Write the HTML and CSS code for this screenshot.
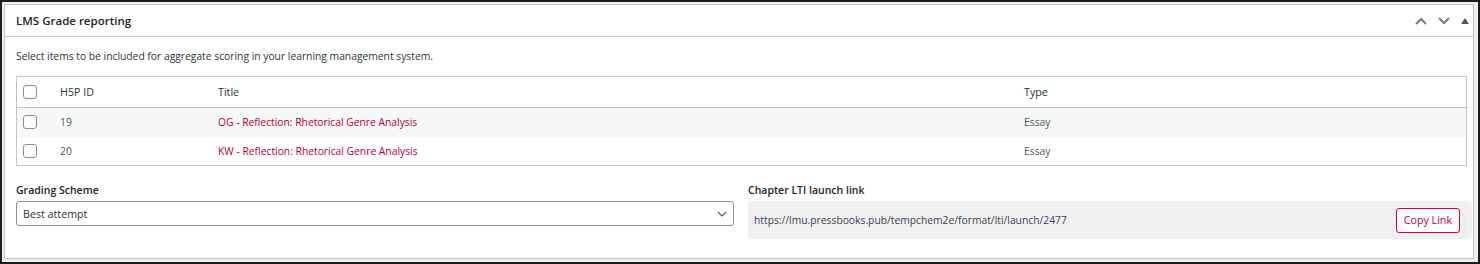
FILE: index.html
```html
<!DOCTYPE html>
<html>
<head>
<meta charset="utf-8">
<title>LMS Grade reporting</title>
<link rel="stylesheet" href="styles.css">
</head>
<body>

<div class="frame">
<div class="postbox">
	<div class="postbox-header">
		<h2 class="hndle">LMS Grade reporting</h2>
		<div class="handle-actions">
			<svg class="arrow" width="12" height="8" viewBox="0 0 12 8"><path d="M1 7 L6 2 L11 7" fill="none" stroke="#787c82" stroke-width="2"/></svg>
			<svg class="arrow" width="12" height="8" viewBox="0 0 12 8"><path d="M1 1 L6 6 L11 1" fill="none" stroke="#787c82" stroke-width="2"/></svg>
			<svg class="arrow" width="8" height="6" viewBox="0 0 8 6"><path d="M0 6 L4 0 L8 6 Z" fill="#50575e"/></svg>
		</div>
	</div>

	<div class="inside">
		<p class="desc">Select items to be included for aggregate scoring in your learning management system.</p>

		<table class="items">
			<thead>
				<tr>
					<td class="check"><span class="box"></span></td>
					<th class="col-id">H5P ID</th>
					<th class="col-title">Title</th>
					<th>Type</th>
				</tr>
			</thead>
			<tbody>
				<tr class="alt">
					<td class="check"><span class="box"></span></td>
					<td>19</td>
					<td><a href="#">OG - Reflection: Rhetorical Genre Analysis</a></td>
					<td>Essay</td>
				</tr>
				<tr>
					<td class="check"><span class="box"></span></td>
					<td>20</td>
					<td><a href="#">KW - Reflection: Rhetorical Genre Analysis</a></td>
					<td>Essay</td>
				</tr>
			</tbody>
		</table>

		<div class="settings">
			<div class="field">
				<label>Grading Scheme</label>
				<div class="select">
					<span>Best attempt</span>
					<svg width="10" height="6" viewBox="0 0 10 6"><path d="M1 1 L5 5 L9 1" fill="none" stroke="#50575e" stroke-width="1.2"/></svg>
				</div>
			</div>
			<div class="field">
				<label>Chapter LTI launch link</label>
				<div class="launch">
					<span class="url">https://lmu.pressbooks.pub/tempchem2e/format/lti/launch/2477</span>
					<button class="copy">Copy Link</button>
				</div>
			</div>
		</div>
	</div>
</div>
</div>

</body>
</html>
```

FILE: styles.css
```css
html, body {
	margin: 0;
	padding: 0;
	background: #fff;
}

body {
	font-family: "Open Sans", "Noto Sans", sans-serif;
	font-size: 10.3px;
	color: #2c3338;
}

.frame {
	width: 1480px;
	height: 264px;
	box-sizing: border-box;
	border: 2px solid #1d1d1d;
	padding: 2px 2px 0 2px;
	background: #f0f0f1;
}

.postbox {
	background: #fff;
	border: 1px solid #c3c4c7;
	width: 1470px;
	height: 255px;
	box-sizing: border-box;
}

.postbox-header {
	display: flex;
	align-items: center;
	justify-content: space-between;
	height: 31px;
	border-bottom: 1px solid #c3c4c7;
	padding: 0 4px 0 11px;
}

.hndle {
	margin: 0;
	font-size: 11.5px;
	font-weight: 600;
	color: #1d2327;
}

.handle-actions {
	display: flex;
	align-items: center;
	gap: 11px;
}

.inside {
	padding: 0 1px 0 11px;
}

.desc {
	margin: 12px 0 12px 0;
	line-height: 15px;
}

.items {
	width: 1451px;
	border: 1px solid #c3c4c7;
	border-collapse: collapse;
}

.items th {
	text-align: left;
	font-weight: 400;
	font-size: 10.7px;
	color: #2c3338;
}

.items thead tr {
	height: 31px;
	border-bottom: 1px solid #c3c4c7;
}

.items tbody tr {
	height: 29px;
}

.items tbody td {
	color: #50575e;
}

.items tr.alt {
	background: #f6f7f7;
}

.items td, .items th {
	padding: 0;
	vertical-align: middle;
}

.items .check {
	width: 37px;
	padding-left: 6px;
}

.items .col-id {
	width: 158px;
}

.items .col-title {
	width: 806px;
}

.box {
	display: block;
	width: 12px;
	height: 12px;
	border: 1px solid #8c8f94;
	border-radius: 3px;
	background: #fff;
}

.items a {
	color: #b5003c;
	text-decoration: none;
}

.settings {
	display: grid;
	grid-template-columns: 718px 724px;
	gap: 14px;
	margin-top: 17px;
}

.field label {
	display: block;
	font-weight: 600;
	font-size: 10.5px;
	color: #1d2327;
	line-height: 14px;
	margin-bottom: 4px;
}

.select {
	display: flex;
	align-items: center;
	justify-content: space-between;
	height: 25px;
	box-sizing: border-box;
	border: 1px solid #8c8f94;
	border-radius: 3px;
	padding: 0 6px 0 6px;
	font-size: 10.7px;
	color: #2c3338;
	margin-top: 2px;
}

.launch {
	display: flex;
	align-items: center;
	justify-content: space-between;
	height: 38px;
	box-sizing: border-box;
	background: #f0f0f1;
	border-radius: 4px;
	padding: 0 12px 0 6px;
	color: #3c434a;
}

.copy {
	font-family: inherit;
	font-size: 10.7px;
	color: #b5003c;
	background: #fff;
	border: 1px solid #d0003c;
	border-radius: 3px;
	height: 25px;
	padding: 0 7px;
}
```
